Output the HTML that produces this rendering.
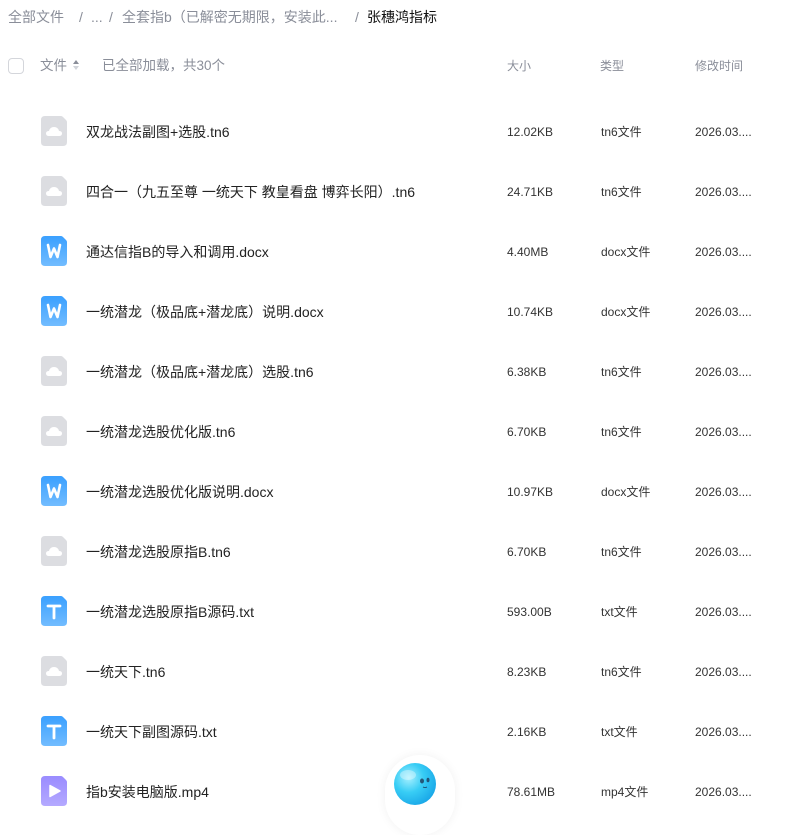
<!DOCTYPE html>
<html><head><meta charset="utf-8"><style>
*{margin:0;padding:0;box-sizing:border-box}
body{width:789px;height:812px;overflow:hidden;background:#fff;font-family:"Liberation Sans","Noto Sans CJK SC",sans-serif;position:relative;color:#222}
.a{position:absolute;white-space:nowrap}
.bc{top:8px;font-size:14px;color:#8a8e99;line-height:18px}
.hd{top:57px;font-size:12px;color:#8a8e99;line-height:18px}
.nm{left:86px;font-size:14px;color:#222;line-height:18px}
.sz{left:507px;font-size:12px;color:#333;line-height:18px}
.tp{left:601px;font-size:12px;color:#333;line-height:18px}
.tm{left:695px;font-size:12px;color:#333;line-height:18px}
.ic{left:41px;width:26px;height:30px}
</style></head><body>
<div class="a bc" style="left:8px">全部文件</div>
<div class="a bc" style="left:79px">/</div>
<div class="a bc" style="left:91px">...</div>
<div class="a bc" style="left:109px">/</div>
<div class="a bc" style="left:122px">全套指b（已解密无期限，安装此...</div>
<div class="a bc" style="left:355px">/</div>
<div class="a bc" style="left:367px;color:#111">张穗鸿指标</div>

<div class="a" style="left:8px;top:58px;width:16px;height:16px;border:1px solid #d4d6db;border-radius:4px"></div>
<div class="a hd" style="left:40px;font-size:13.5px">文件</div>
<svg class="a" style="left:72px;top:59px" width="8" height="12"><path d="M4 1L7 5H1Z" fill="#8a8e99"/><path d="M4 11L7 7H1Z" fill="#d0d3d9"/></svg>
<div class="a hd" style="left:102px;font-size:13.5px">已全部加载，共30个</div>
<div class="a hd" style="left:507px">大小</div>
<div class="a hd" style="left:600px">类型</div>
<div class="a hd" style="left:695px">修改时间</div>

<svg width="0" height="0" style="position:absolute">
<defs>
<linearGradient id="gb" x1="0" y1="0" x2="0" y2="1"><stop offset="0" stop-color="#3aa0ff"/><stop offset="1" stop-color="#72bcff"/></linearGradient>
<linearGradient id="gp" x1="0" y1="0" x2="0" y2="1"><stop offset="0" stop-color="#9a8cff"/><stop offset="1" stop-color="#b4a9ff"/></linearGradient>
<radialGradient id="gbub" cx="0.35" cy="0.35" r="0.7"><stop offset="0" stop-color="#a8f0ff"/><stop offset="0.5" stop-color="#38cdf5"/><stop offset="1" stop-color="#1aa8e8"/></radialGradient>
</defs></svg>

<div id="rows"></div>
<script>
var S='<path d="M4 0H20Q21 0 22 1L25 4Q26 5 26 6V26Q26 30 22 30H4Q0 30 0 26V4Q0 0 4 0Z" fill="';
var C=S+'#dcdde1"/><path d="M8 20Q5 20 5 17.5Q5 15 8 15Q9 11 13 11Q17 11 18 15Q21 15 21 17.5Q21 20 18 20Z" fill="#fff"/>';
var W=S+'url(#gb)"/><path d="M7 9L9.5 21L13 12.5L16.5 21L19 9" stroke="#fff" stroke-width="2.6" fill="none" stroke-linejoin="round" stroke-linecap="round"/>';
var T=S+'url(#gb)"/><path d="M7 10H19M13 10V22" stroke="#fff" stroke-width="2.8" fill="none" stroke-linecap="round"/>';
var P=S+'url(#gp)"/><path d="M9 9.5L19 15L9 20.5Z" fill="#fff" stroke="#fff" stroke-width="1.5" stroke-linejoin="round"/>';
var d=[[C,"双龙战法副图+选股.tn6","12.02KB","tn6文件"],
[C,"四合一（九五至尊 一统天下 教皇看盘 博弈长阳）.tn6","24.71KB","tn6文件"],
[W,"通达信指B的导入和调用.docx","4.40MB","docx文件"],
[W,"一统潜龙（极品底+潜龙底）说明.docx","10.74KB","docx文件"],
[C,"一统潜龙（极品底+潜龙底）选股.tn6","6.38KB","tn6文件"],
[C,"一统潜龙选股优化版.tn6","6.70KB","tn6文件"],
[W,"一统潜龙选股优化版说明.docx","10.97KB","docx文件"],
[C,"一统潜龙选股原指B.tn6","6.70KB","tn6文件"],
[T,"一统潜龙选股原指B源码.txt","593.00B","txt文件"],
[C,"一统天下.tn6","8.23KB","tn6文件"],
[T,"一统天下副图源码.txt","2.16KB","txt文件"],
[P,"指b安装电脑版.mp4","78.61MB","mp4文件"]];
var h='';
d.forEach(function(r,i){var c=131+60*i;
h+='<svg class="a ic" style="top:'+(c-15)+'px" viewBox="0 0 26 30">'+r[0]+'</svg>';
h+='<div class="a nm" style="top:'+(c-8)+'px">'+r[1]+'</div>';
h+='<div class="a sz" style="top:'+(c-8)+'px">'+r[2]+'</div>';
h+='<div class="a tp" style="top:'+(c-8)+'px">'+r[3]+'</div>';
h+='<div class="a tm" style="top:'+(c-8)+'px">2026.03....</div>';});
document.getElementById('rows').innerHTML=h;
</script>
<div class="a" style="left:385px;top:755px;width:70px;height:80px;border-radius:35px;background:#fff;box-shadow:0 0 10px rgba(0,0,0,0.06)"></div>
<svg class="a" style="left:392px;top:761px" width="46" height="46"><circle cx="23" cy="23" r="21" fill="url(#gbub)"/><ellipse cx="16" cy="14" rx="8" ry="5" fill="#fff" opacity=".35"/><ellipse cx="30" cy="20" rx="2" ry="2.5" fill="#1e3a5a" opacity=".8"/><ellipse cx="36" cy="19" rx="1.5" ry="2.3" fill="#1e3a5a" opacity=".8"/><path d="M31 26Q33 27 35 26" stroke="#1e3a5a" stroke-width="0.8" fill="none"/></svg>
</body></html>
